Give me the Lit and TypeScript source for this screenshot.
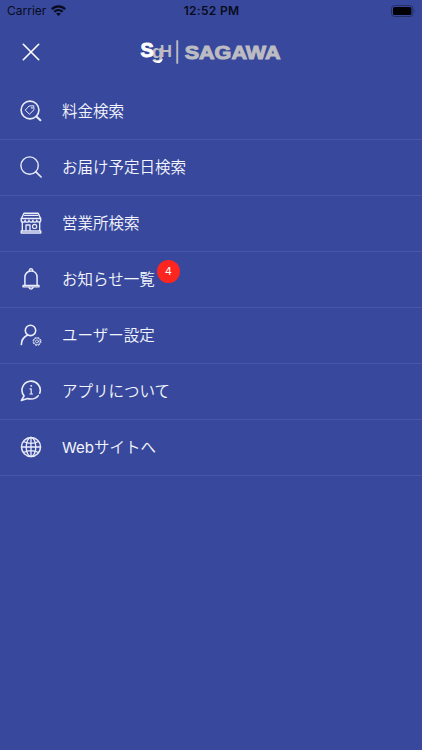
import { LitElement, html, css, svg, nothing } from "lit";
import { customElement } from "lit/decorators.js";

const icons = {
  price: svg`<circle cx="10" cy="10" r="8.9" stroke-width="1.6"/><path d="M16.4 16.4 20.4 20.2" stroke-width="2"/>
    <path d="M9.5 6 13.7 5.7 14 9.8 9.4 14.2 5.5 10.4Z" stroke-width="1"/><circle cx="11.8" cy="7.9" r=".5" stroke-width=".7"/>`,
  search: svg`<circle cx="9.6" cy="9.6" r="8.7" stroke-width="1.4"/><path d="M15.9 15.9 21.1 21" stroke-width="1.6"/>`,
  shop: svg`<path d="M4 1.2H18.2L20.6 6.5H1.4Z M4.7 3.4H17.5" stroke-width="1.4"/>
    <path d="M1.2 6.8V8.2A1.95 1.95 0 0 0 5.1 8.2 1.95 1.95 0 0 0 9 8.2 1.95 1.95 0 0 0 12.9 8.2 1.95 1.95 0 0 0 16.8 8.2 1.95 1.95 0 0 0 20.7 8.2V6.8" stroke-width="1.4"/>
    <path d="M2.3 10V18.5M19.7 10V18.5M1.2 19H20.8V21H1.2ZM6 19V13H10V19" stroke-width="1.35"/>
    <circle cx="14.6" cy="14.4" r="2.1" stroke-width="1.2"/>`,
  bell: svg`<path d="M4.9 17V9.5C4.9 5.7 7.4 3.1 11 3.1S17.1 5.7 17.1 9.5V17" stroke-width="1.5"/>
    <path d="M9.4 3A1.7 1.7 0 1 1 12.6 3M3 17.3H19V18.9H3ZM8.8 19.1C9.2 21.6 12.8 21.6 13.2 19.1" stroke-width="1.3"/>`,
  user: svg`<circle cx="10.5" cy="6.4" r="5.2" stroke-width="1.6"/><path d="M7.2 11.2C3.6 13 1.5 16.3 1.4 20.4" stroke-width="1.7"/>
    <circle cx="17" cy="17.4" r="4" stroke-width=".9" stroke-linecap="butt" stroke-dasharray="1.9 1.24"/><circle cx="17" cy="17.4" r="3.4" stroke-width=".7"/><circle cx="17" cy="17.4" r="1.5" stroke-width=".8"/>`,
  info: svg`<path d="M4.1 15.9A9.1 9 0 1 1 19.7 13.2M18.3 15.6C15.8 19 12.2 19.6 7.4 18.6L1.4 20.5 4.1 15.9" stroke-width="1.6"/>
    <path d="M10 8.9H11.2V13.8M9.9 14H12.5" stroke-width="1.2"/><circle cx="11.1" cy="5.9" r=".5" stroke-width=".9"/>`,
  globe: svg`<circle cx="11" cy="11" r="9.5" stroke-width="1.5"/><ellipse cx="11" cy="11" rx="4.8" ry="9.5" stroke-width="1.35"/>
    <path d="M11 1.5V20.5M1.5 11H20.5M3.4 5.5C7.8 7.6 14.2 7.6 18.6 5.5M3.4 16.5C7.8 14.4 14.2 14.4 18.6 16.5" stroke-width="1.3"/>`,
};

interface Item {
  icon: keyof typeof icons;
  label: string;
  badge?: number;
}

const items: Item[] = [
  { icon: "price", label: "料金検索" },
  { icon: "search", label: "お届け予定日検索" },
  { icon: "shop", label: "営業所検索" },
  { icon: "bell", label: "お知らせ一覧", badge: 4 },
  { icon: "user", label: "ユーザー設定" },
  { icon: "info", label: "アプリについて" },
  { icon: "globe", label: "Webサイトへ" },
];

@customElement("status-bar")
class StatusBar extends LitElement {
  static styles = css`
    :host {
      display: grid;
      grid-template-columns: 1fr auto 1fr;
      align-items: center;
      height: 22px;
      padding: 0 6px 0 7px;
      box-sizing: border-box;
      color: #080b1b;
      font: 12px/22px Inter, sans-serif;
    }
    .carrier { display: flex; align-items: center; gap: 5px; }
    .time { font-weight: 600; letter-spacing: 0.3px; }
    .battery { justify-self: end; margin-top: -1px; }
    svg { display: block; }
    .wifi { margin-top: -1px; }
  `;
  render() {
    return html`
      <div class="carrier">
        <span>Carrier</span>
        <svg class="wifi" width="15" height="11" viewBox="0 0 15 11" fill="none" stroke="#080b1b" stroke-width="2.2">
          <path d="M.8 4.2C4.5.3 10.5.3 14.2 4.2M3.3 6.8C5.7 4.5 9.3 4.5 11.7 6.8" />
          <path d="M5.1 8.6Q7.5 6.7 9.9 8.6L7.5 11Z" fill="#080b1b" stroke="none" />
        </svg>
      </div>
      <span class="time">12:52 PM</span>
      <svg class="battery" width="25" height="12" viewBox="0 0 25 12">
        <rect x=".5" y=".5" width="21.4" height="11" rx="3" fill="none" stroke="#242f66" />
        <rect x="2" y="2" width="18.4" height="8" rx="1.5" fill="#000005" />
        <path d="M23.2 4.2Q25 6 23.2 7.8Z" fill="#242f66" />
      </svg>
    `;
  }
}

@customElement("menu-row")
class MenuRow extends LitElement {
  static properties = { item: { attribute: false } };
  declare item: Item;
  static styles = css`
    :host {
      display: flex;
      align-items: center;
      gap: 20px;
      height: 56px;
      padding: 0 20px 1px;
      box-sizing: border-box;
      border-bottom: 1px solid #4756a6;
      color: #f5f6fc;
      font: 350 15.5px/24px Inter, "Noto Sans CJK JP", sans-serif;
    }
    .icon { width: 22px; height: 22px; flex: none; fill: none; stroke: #e9ecf9; stroke-linecap: round; stroke-linejoin: round; }
    .label { position: relative; top: 1px; white-space: nowrap; }
    .latin { font-size: 15px; font-weight: 400; }
    .badge {
      position: absolute;
      left: calc(100% + 2px);
      top: -8px;
      width: 23px;
      height: 23px;
      border-radius: 50%;
      background: #fc2520;
      color: #fff;
      font-size: 11px;
      font-weight: 400;
      line-height: 23px;
      text-align: center;
    }
  `;
  render() {
    const { icon, label, badge } = this.item;
    const latin = label.match(/^[A-Za-z]*/)![0];
    return html`
      <svg class="icon" viewBox="0 0 22 22">${icons[icon]}</svg>
      <span class="label">${latin ? html`<span class="latin">${latin}</span>` : nothing}${label.slice(latin.length)}${badge ? html`<span class="badge">${badge}</span>` : nothing}</span>
    `;
  }
}

@customElement("app-root")
class AppRoot extends LitElement {
  static styles = css`
    :host { display: block; min-height: 100vh; background: #38499d; }
    .header { display: grid; grid-template-columns: 62px 1fr 62px; align-items: center; height: 62px; padding-bottom: 2px; box-sizing: border-box; }
    .close { justify-self: center; fill: none; stroke: #fff; stroke-width: 1.6; stroke-linecap: round; }
    .logo { justify-self: center; display: block; }
    .mark { font-family: "Liberation Sans", sans-serif; font-weight: 700; }
    .wide { font-family: "Liberation Sans", sans-serif; font-weight: 700; stroke: #bcbcc2; stroke-width: 1px; }
    .gray { fill: #bcbcc2; }
    .white { fill: #fff; }
    .s { stroke: #fff; stroke-width: 1px; }
  `;
  render() {
    return html`
      <status-bar></status-bar>
      <div class="header">
        <svg class="close" width="20" height="20" viewBox="0 0 20 20"><path d="M2.3 2.3 17.7 17.7M17.7 2.3 2.3 17.7" /></svg>
        <svg class="logo" width="142" height="30" viewBox="0 0 142 30">
          <text class="mark gray" x="11.8" y="20.8" font-size="18" textLength="11.5" lengthAdjust="spacingAndGlyphs">g</text>
          <path d="M12.2 22.8Q18 25.4 22.8 21.4C22.4 27.2 15 27.6 12.2 22.8Z" class="white" />
          <text class="mark gray" x="19.8" y="19.8" font-size="16" textLength="12.2" lengthAdjust="spacingAndGlyphs">H</text>
          <text class="mark white s" x=".6" y="19.6" font-size="21" textLength="13.2" lengthAdjust="spacingAndGlyphs">S</text>
          <rect x="36.3" y="3.3" width="1.9" height="23.4" class="gray" />
          <text class="wide gray" x="44.7" y="22.1" font-size="18.8" textLength="95.8" lengthAdjust="spacingAndGlyphs">SAGAWA</text>
        </svg>
      </div>
      ${items.map((item) => html`<menu-row .item=${item}></menu-row>`)}
    `;
  }
}
